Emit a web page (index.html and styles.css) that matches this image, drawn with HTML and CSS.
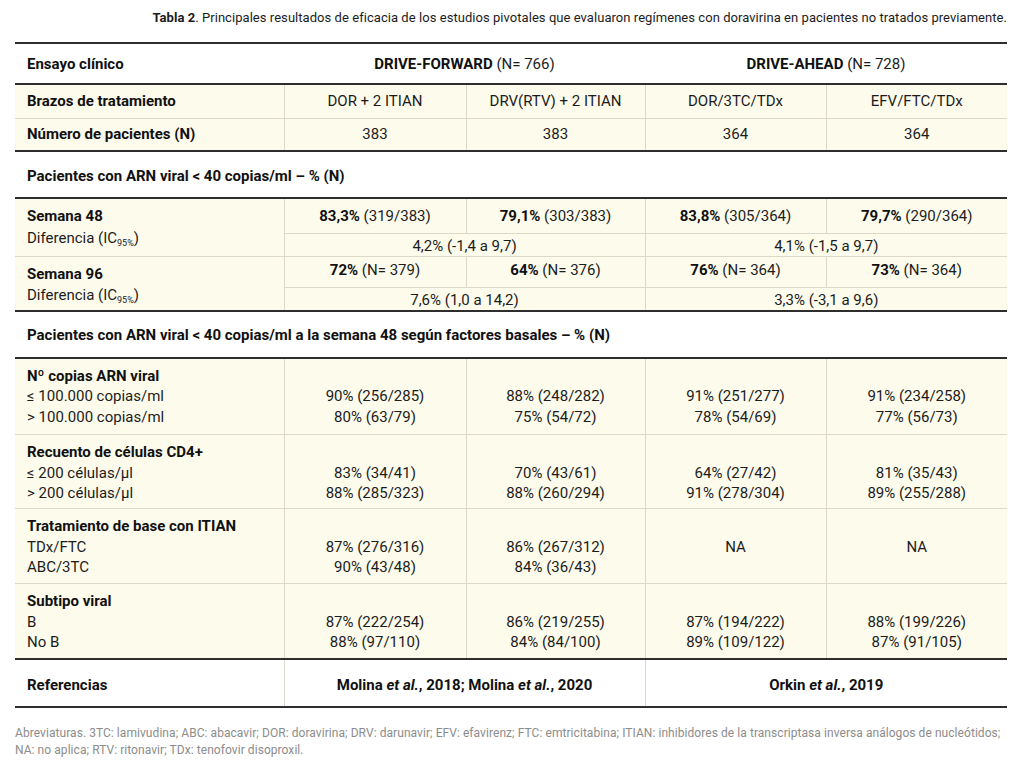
FILE: index.html
```html
<!DOCTYPE html>
<html lang="es">
<head>
<meta charset="utf-8">
<title>Tabla 2</title>
<link rel="stylesheet" href="styles.css">
</head>
<body>
<div class="page">
  <p class="caption"><b>Tabla 2</b>. Principales resultados de eficacia de los estudios pivotales que evaluaron regímenes con doravirina en pacientes no tratados previamente.</p>
  <table class="results">
    <colgroup>
      <col class="c-label"><col class="c-a"><col class="c-b"><col class="c-c"><col class="c-d">
    </colgroup>
    <tbody>
      <tr class="r-head">
        <th class="label">Ensayo clínico</th>
        <th colspan="2"><b>DRIVE-FORWARD</b> <span class="reg">(N= 766)</span></th>
        <th colspan="2"><b>DRIVE-AHEAD</b> <span class="reg">(N= 728)</span></th>
      </tr>
    </tbody>
    <tbody class="beige">
      <tr class="r-arm">
        <td class="label"><b>Brazos de tratamiento</b></td>
        <td>DOR + 2 ITIAN</td><td>DRV(RTV) + 2 ITIAN</td><td>DOR/3TC/TDx</td><td>EFV/FTC/TDx</td>
      </tr>
      <tr class="r-num">
        <td class="label"><b>Número de pacientes (N)</b></td>
        <td>383</td><td>383</td><td>364</td><td>364</td>
      </tr>
    </tbody>
    <tbody>
      <tr class="r-section"><td colspan="5" class="label"><b>Pacientes con ARN viral &lt; 40 copias/ml – % (N)</b></td></tr>
    </tbody>
    <tbody class="beige">
      <tr class="r-wk1">
        <td rowspan="2" class="label stack"><b>Semana 48</b><br>Diferencia (IC<sub>95%</sub>)</td>
        <td><b>83,3%</b> (319/383)</td><td><b>79,1%</b> (303/383)</td><td><b>83,8%</b> (305/364)</td><td><b>79,7%</b> (290/364)</td>
      </tr>
      <tr class="r-dif1"><td colspan="2">4,2% (-1,4 a 9,7)</td><td colspan="2">4,1% (-1,5 a 9,7)</td></tr>
      <tr class="r-wk2">
        <td rowspan="2" class="label stack"><b>Semana 96</b><br>Diferencia (IC<sub>95%</sub>)</td>
        <td><b>72%</b> (N= 379)</td><td><b>64%</b> (N= 376)</td><td><b>76%</b> (N= 364)</td><td><b>73%</b> (N= 364)</td>
      </tr>
      <tr class="r-dif2"><td colspan="2">7,6% (1,0 a 14,2)</td><td colspan="2">3,3% (-3,1 a 9,6)</td></tr>
    </tbody>
    <tbody>
      <tr class="r-section"><td colspan="5" class="label"><b>Pacientes con ARN viral &lt; 40 copias/ml a la semana 48 según factores basales – % (N)</b></td></tr>
    </tbody>
    <tbody class="beige groups">
      <tr class="r-g1">
        <td class="label"><b>Nº copias ARN viral</b><br>≤ 100.000 copias/ml<br>&gt; 100.000 copias/ml</td>
        <td class="val">90% (256/285)<br>80% (63/79)</td>
        <td class="val">88% (248/282)<br>75% (54/72)</td>
        <td class="val">91% (251/277)<br>78% (54/69)</td>
        <td class="val">91% (234/258)<br>77% (56/73)</td>
      </tr>
      <tr class="r-g2">
        <td class="label"><b>Recuento de células CD4+</b><br>≤ 200 células/µl<br>&gt; 200 células/µl</td>
        <td class="val">83% (34/41)<br>88% (285/323)</td>
        <td class="val">70% (43/61)<br>88% (260/294)</td>
        <td class="val">64% (27/42)<br>91% (278/304)</td>
        <td class="val">81% (35/43)<br>89% (255/288)</td>
      </tr>
      <tr class="r-g3">
        <td class="label"><b>Tratamiento de base con ITIAN</b><br>TDx/FTC<br>ABC/3TC</td>
        <td class="val">87% (276/316)<br>90% (43/48)</td>
        <td class="val">86% (267/312)<br>84% (36/43)</td>
        <td class="val">NA</td>
        <td class="val">NA</td>
      </tr>
      <tr class="r-g4">
        <td class="label"><b>Subtipo viral</b><br>B<br>No B</td>
        <td class="val">87% (222/254)<br>88% (97/110)</td>
        <td class="val">86% (219/255)<br>84% (84/100)</td>
        <td class="val">87% (194/222)<br>89% (109/122)</td>
        <td class="val">88% (199/226)<br>87% (91/105)</td>
      </tr>
    </tbody>
    <tbody>
      <tr class="r-ref">
        <td class="label"><b>Referencias</b></td>
        <td colspan="2"><b>Molina <i>et al.</i>, 2018; Molina <i>et al.</i>, 2020</b></td>
        <td colspan="2"><b>Orkin <i>et al.</i>, 2019</b></td>
      </tr>
    </tbody>
  </table>
  <p class="note">Abreviaturas. 3TC: lamivudina; ABC: abacavir; DOR: doravirina; DRV: darunavir; EFV: efavirenz; FTC: emtricitabina; ITIAN: inhibidores de la transcriptasa inversa análogos de nucleótidos;<br>NA: no aplica; RTV: ritonavir; TDx: tenofovir disoproxil.</p>
</div>
</body>
</html>
```
FILE: styles.css
```css
html, body {
  margin: 0;
  padding: 0;
  background: #ffffff;
}
body {
  font-family: Roboto, "Liberation Sans", sans-serif;
  color: #1f1f1f;
}
.page {
  width: 992px;
  margin-left: 15px;
  padding-top: 10px;
}
.caption {
  margin: 0 0 16px 0;
  text-align: right;
  font-size: 13px;
  line-height: 16px;
  letter-spacing: 0.05px;
  color: #1c1c1c;
}
.caption b { font-weight: 700; }

.results {
  width: 992px;
  border-collapse: collapse;
  table-layout: fixed;
  font-size: 15px;
  line-height: 20px;
  color: #1c1c1c;
  border-top: 2px solid #2e2e2e;
  border-bottom: 2px solid #2e2e2e;
}
.c-label { width: 269px; }
.c-a { width: 182px; }
.c-b { width: 179px; }
.c-c { width: 181px; }
.c-d { width: 181px; }

.results th, .results td {
  padding: 0 12px;
  text-align: center;
  vertical-align: middle;
  font-weight: 400;
}
.results .label { text-align: left; }
.results b { font-weight: 700; color: #111; }
.results th b, .results th.label { font-weight: 700; color: #111; }
.results .reg { font-weight: 400; }

.beige td { background: #fdfbec; }
.beige td + td { border-left: 1px solid #dcd9cb; }
.beige tr + tr td { border-top: 1px solid #dcd9cb; }
.beige .r-dif1 td:first-child, .beige .r-dif2 td:first-child { border-left: 1px solid #dcd9cb; }

.r-head { height: 41px; border-bottom: 2px solid #2e2e2e; }
.r-arm { height: 34px; }
.r-num { height: 33px; border-bottom: 2px solid #2e2e2e; }
.r-section { height: 47px; border-bottom: 2px solid #2e2e2e; }
.r-section td { padding-top: 2px; }

.r-wk1 { height: 35px; }
.r-dif1 { height: 20px; }
.r-wk2 { height: 31px; }
.r-dif2 { height: 23px; border-bottom: 2px solid #2e2e2e; }
.r-dif1 td, .r-dif2 td { padding-top: 2px; }
.r-wk2 td { padding-bottom: 3px; }

.results td.stack {
  vertical-align: top;
  padding-top: 7px;
  padding-bottom: 0;
  line-height: 21.5px;
}
sub {
  font-size: 9px;
  line-height: 0;
  vertical-align: -3px;
}

.groups tr { height: 75px; }
.groups .r-g1 { height: 77px; }
.groups .r-g2 { height: 74px; }
.groups .r-g4 { border-bottom: 2px solid #2e2e2e; }
.groups td {
  vertical-align: top;
  line-height: 20.5px;
  padding-top: 7px;
}
.groups td.val { padding-top: 27.5px; }

.r-ref { height: 48px; }
.r-ref td { padding-top: 5px; }
.r-ref td + td { border-left: 1px solid #dcd9cb; }

.note {
  margin: 17px 0 0 0;
  font-size: 12px;
  line-height: 17px;
  letter-spacing: 0.06px;
  white-space: nowrap;
  color: #8c8c8c;
}
```
